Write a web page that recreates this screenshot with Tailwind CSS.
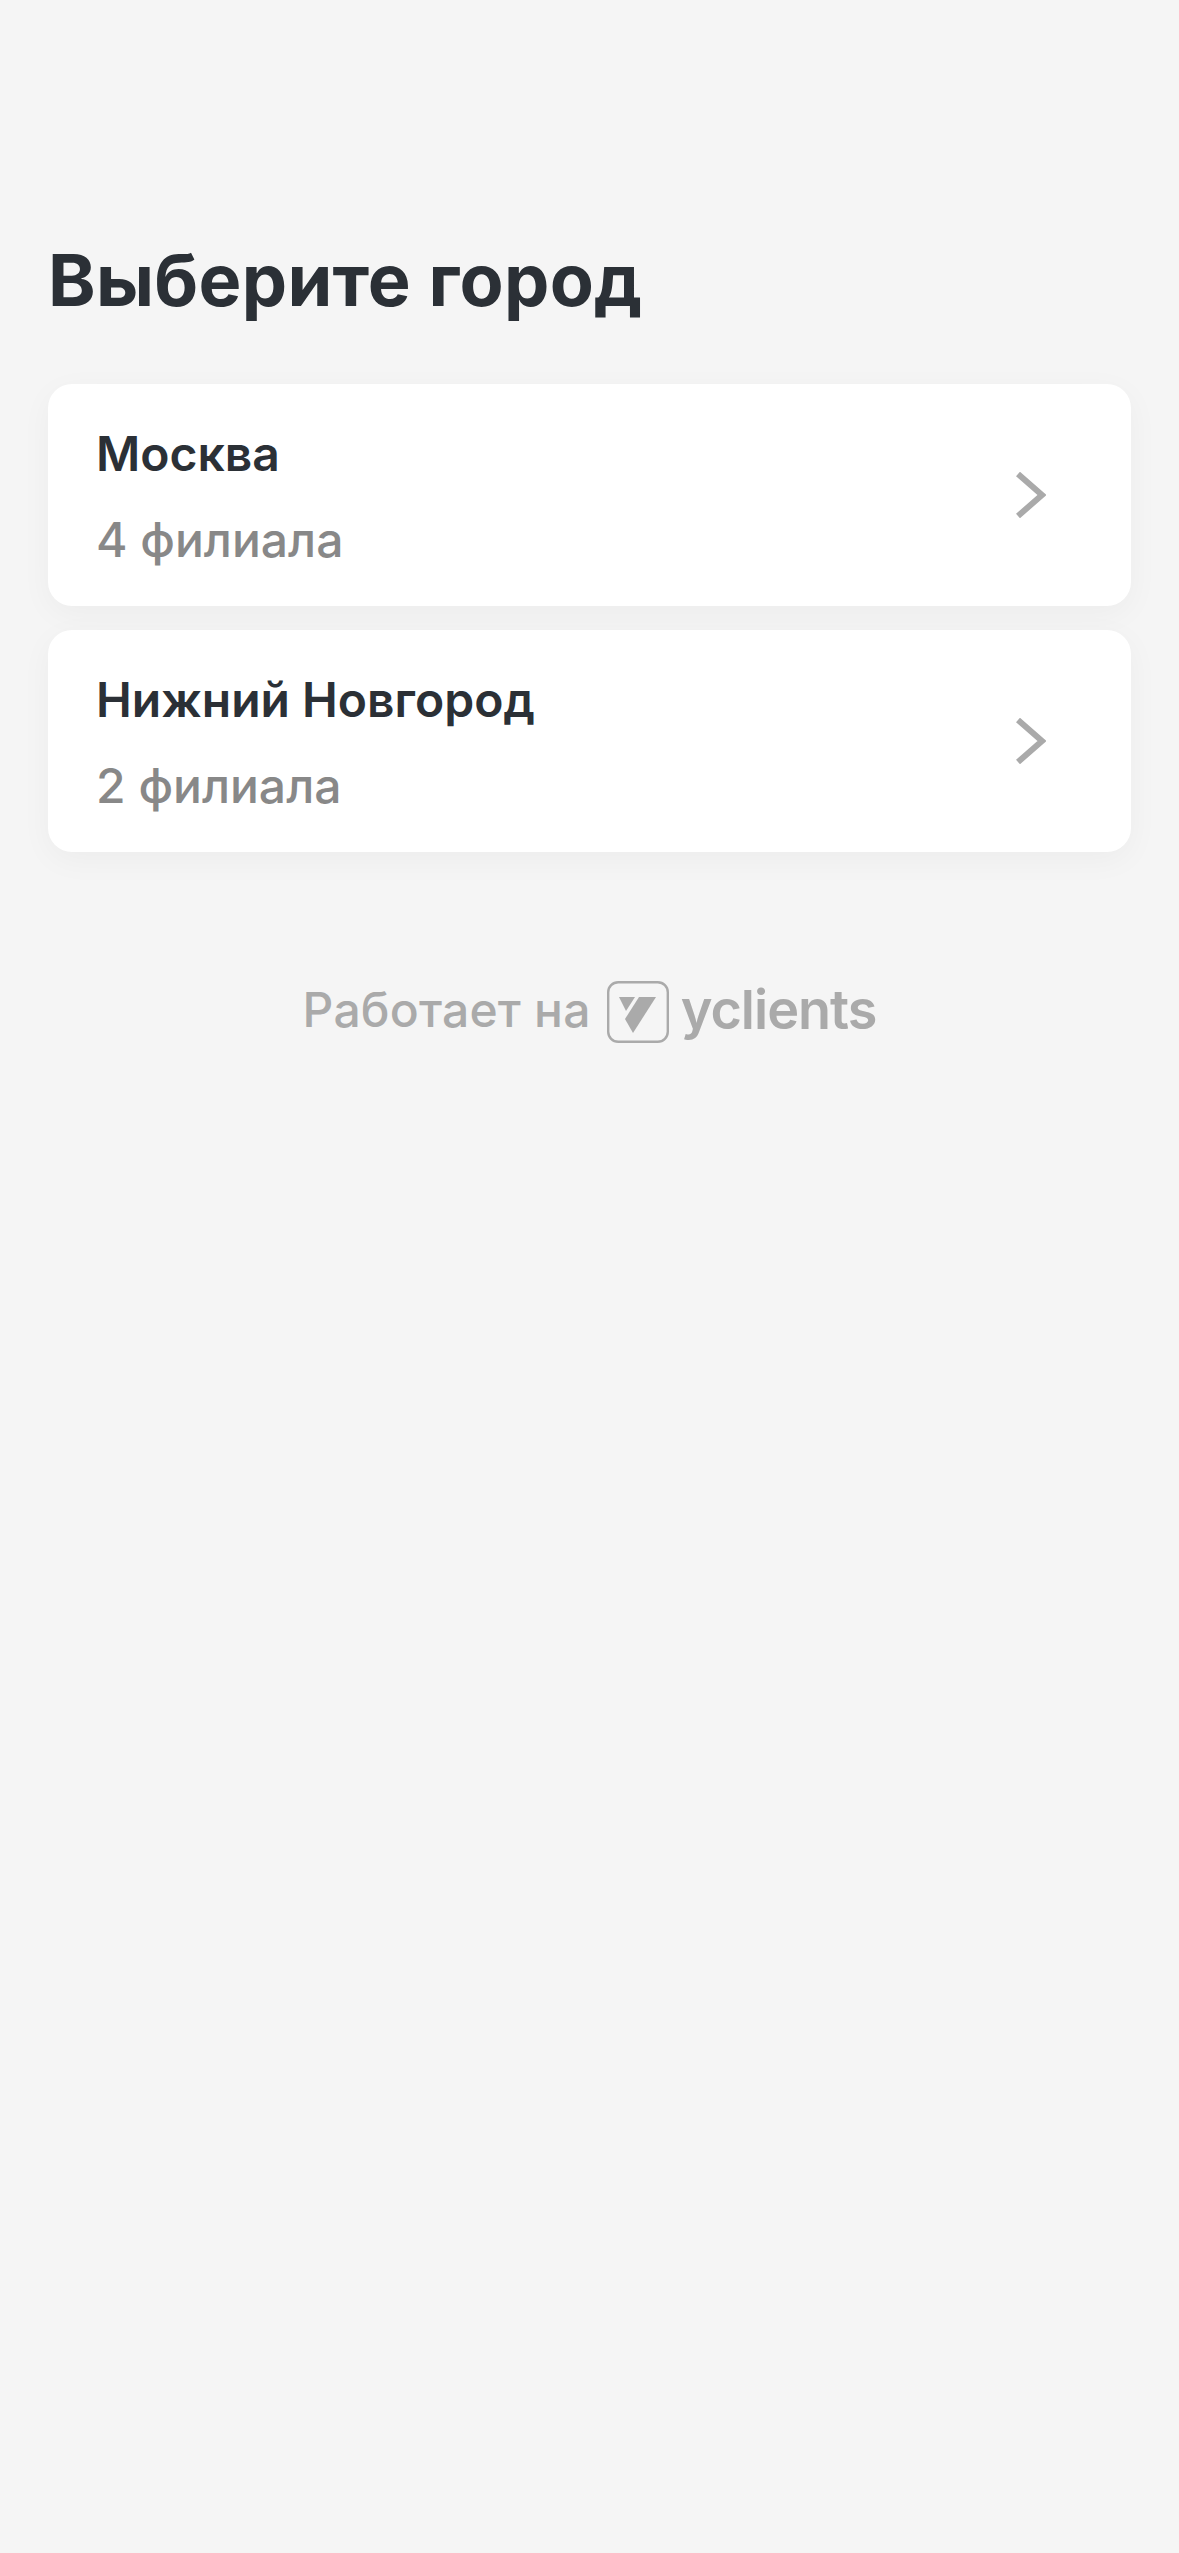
<!DOCTYPE html>
<html lang="ru"><head><meta charset="utf-8"><script src="https://cdn.jsdelivr.net/npm/@tailwindcss/browser@4"></script></head>
<body class="m-0">
<main class="w-[1179px] h-[2553px] bg-[#f5f5f5] font-['Inter',sans-serif] overflow-hidden px-12 pt-[236px]">
  <h1 class="text-[72px] leading-[88px] font-bold text-[#2b3036] tracking-[0.3px]">Выберите город</h1>
  <div class="mt-[60px] flex flex-col gap-6">
    <a class="h-[222px] bg-white rounded-3xl shadow-[0_8px_32px_rgba(0,0,0,0.04)] pl-12 pr-[85px] flex items-center justify-between">
      <div class="pt-[3px]">
        <div class="text-[48px] leading-[58px] font-semibold text-[#2b3036]">Москва</div>
        <div class="mt-7 text-[48px] leading-[58px] font-medium text-[#888888]">4 филиала</div>
      </div>
      <svg class="w-[30px] h-[46px]" viewBox="0 0 30 46" fill="none" stroke="#aaaaaa" stroke-width="6"><path d="M2 2 L26 23 L2 44"/></svg>
    </a>
    <a class="h-[222px] bg-white rounded-3xl shadow-[0_8px_32px_rgba(0,0,0,0.04)] pl-12 pr-[85px] flex items-center justify-between">
      <div class="pt-[3px]">
        <div class="text-[48px] leading-[58px] font-semibold text-[#2b3036]">Нижний Новгород</div>
        <div class="mt-7 text-[48px] leading-[58px] font-medium text-[#888888]">2 филиала</div>
      </div>
      <svg class="w-[30px] h-[46px]" viewBox="0 0 30 46" fill="none" stroke="#aaaaaa" stroke-width="6"><path d="M2 2 L26 23 L2 44"/></svg>
    </a>
  </div>
  <div class="mt-[124px] flex items-center justify-center text-[#aaaaaa] font-medium">
    <span class="text-[48px] leading-[60px] tracking-[0.2px]">Работает на</span>
    <svg class="ml-[16px] mt-[5px] w-[62px] h-[62px]" viewBox="0 0 62 62" fill="none"><rect x="1.2" y="1.2" width="59.6" height="59.6" rx="10" stroke="#aaaaaa" stroke-width="2.4"/><path d="M12 16 H28 L19 30 Z" fill="#aaaaaa"/><path d="M32 16 H49 L26 52 L18 38 Z" fill="#aaaaaa"/></svg>
    <span class="ml-[12px] text-[54px] leading-[60px] font-semibold tracking-[-1px]">yclients</span>
  </div>
</main>
</body></html>
